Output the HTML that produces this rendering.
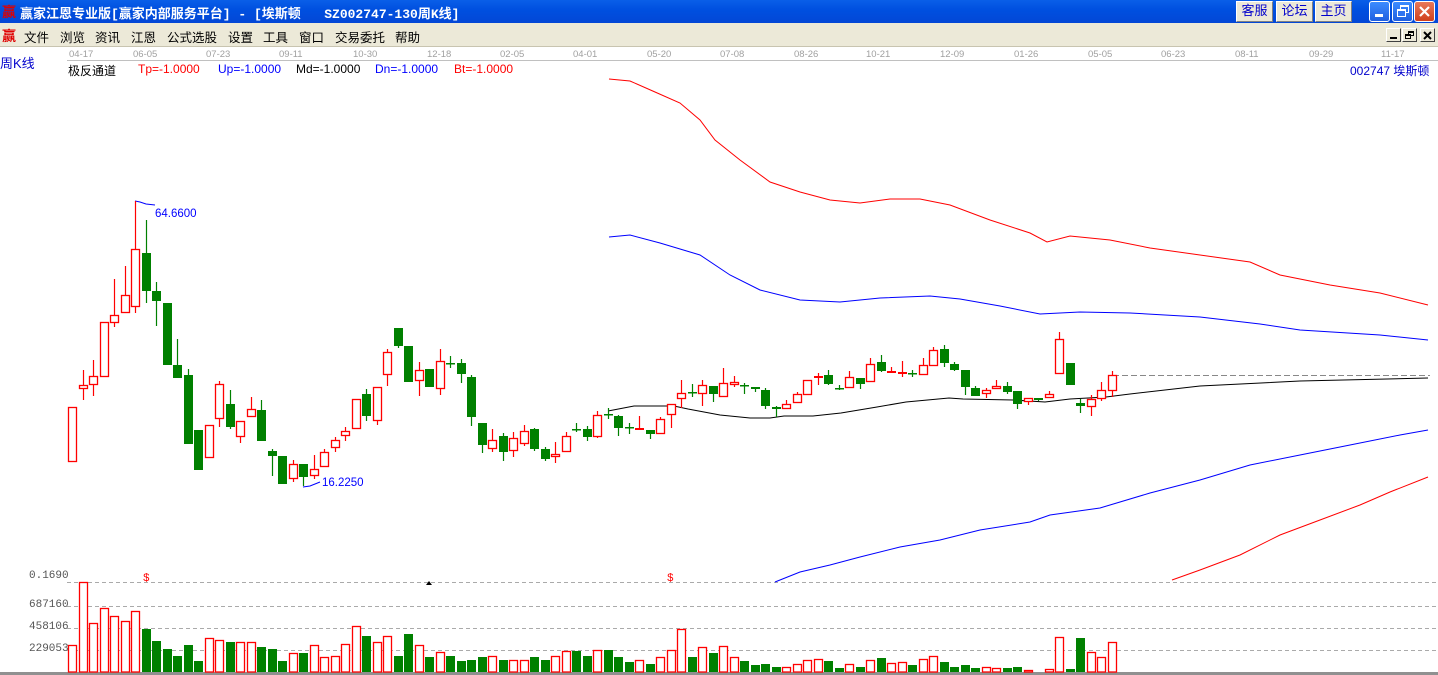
<!DOCTYPE html>
<html><head><meta charset="utf-8"><style>
*{margin:0;padding:0;box-sizing:border-box}
body{width:1438px;height:675px;overflow:hidden;background:#fff;position:relative;font-family:"Liberation Sans","Noto Sans CJK SC",sans-serif}
.title{position:absolute;left:0;top:0;width:1438px;height:23px;background:linear-gradient(#0a5fe8,#0050e0 40%,#0347d6);}
.title .t{position:absolute;left:20px;top:3px;color:#fff;font-weight:bold;font-size:13px;letter-spacing:0;white-space:pre;font-family:"Liberation Mono","Noto Sans CJK SC",monospace}
.ico{position:absolute;color:#e00000;font-weight:bold;font-size:14px;font-family:"Noto Sans CJK SC",sans-serif}
.tb{position:absolute;top:1px;height:21px;width:37px;background:#ece9d8;border:1px solid #fff;border-right-color:#808080;border-bottom-color:#808080;color:#00c;font-size:13px;text-align:center;line-height:18px}
.wb{position:absolute;top:1px;width:21px;height:21px;border:1px solid #fff;border-radius:3px;background:linear-gradient(#3c8cff,#1f5fe0)}
.menu{position:absolute;left:0;top:23px;width:1438px;height:24px;background:#ece9d8;border-bottom:1px solid #c8c4b0}
.menu span{position:absolute;top:4px;font-size:12.5px;color:#000}
.mb{position:absolute;top:28px;width:15px;height:14px;background:#ece9d8;border:1px solid #fff;border-right-color:#404040;border-bottom-color:#404040}
.d{position:absolute;top:49px;font-size:9.5px;color:#a0a0a0}
.lg{position:absolute;top:62px;font-size:12px}
.vl{position:absolute;left:29px;font-size:11px;color:#555;font-family:"Liberation Mono",monospace}
</style></head><body>
<div class="title"><span class="ico" style="left:2px;top:2px">赢</span><span class="t">赢家江恩专业版[赢家内部服务平台] - [埃斯顿   SZ002747-130周K线]</span>
<div class="tb" style="left:1236px">客服</div><div class="tb" style="left:1276px">论坛</div><div class="tb" style="left:1315px">主页</div>
<div class="wb" style="left:1369px"><div style="position:absolute;left:5px;top:12px;width:8px;height:3px;background:#fff"></div></div>
<div class="wb" style="left:1392px"><div style="position:absolute;left:7px;top:3px;width:9px;height:8px;border:2px solid #fff;border-width:2px 1px 1px 1px"></div><div style="position:absolute;left:4px;top:7px;width:9px;height:8px;border:2px solid #fff;border-width:2px 1px 1px 1px;background:#2f74f0"></div></div>
<div class="wb" style="left:1414px;background:linear-gradient(#e8785a,#d0401c)"><svg width="19" height="19" style="position:absolute;left:0;top:0"><path d="M5 5L14 14M14 5L5 14" stroke="#fff" stroke-width="2.2"/></svg></div>
</div>
<div class="menu"><span style="left:2px;top:3px;color:#e00000;font-weight:bold;font-size:14px">赢</span>
<span style="left:24px">文件</span><span style="left:60px">浏览</span><span style="left:95px">资讯</span><span style="left:131px">江恩</span><span style="left:167px">公式选股</span><span style="left:228px">设置</span><span style="left:263px">工具</span><span style="left:299px">窗口</span><span style="left:335px">交易委托</span><span style="left:395px">帮助</span>
</div>
<div class="mb" style="left:1386px"><div style="position:absolute;left:3px;top:8px;width:7px;height:2px;background:#000"></div></div>
<div class="mb" style="left:1402px"><div style="position:absolute;left:5px;top:2px;width:6px;height:5px;border:1px solid #000;border-top-width:2px"></div><div style="position:absolute;left:2px;top:5px;width:6px;height:5px;border:1px solid #000;border-top-width:2px;background:#ece9d8"></div></div>
<div class="mb" style="left:1420px"><svg width="13" height="12" style="position:absolute;left:0;top:0"><path d="M3 3L10 10M10 3L3 10" stroke="#000" stroke-width="2"/></svg></div>
<div style="position:absolute;left:67px;top:60px;width:1371px;height:1px;background:#c0c0c0"></div>
<span class="d" style="left:69px">04-17</span><span class="d" style="left:133px">06-05</span><span class="d" style="left:206px">07-23</span><span class="d" style="left:279px">09-11</span><span class="d" style="left:353px">10-30</span><span class="d" style="left:427px">12-18</span><span class="d" style="left:500px">02-05</span><span class="d" style="left:573px">04-01</span><span class="d" style="left:647px">05-20</span><span class="d" style="left:720px">07-08</span><span class="d" style="left:794px">08-26</span><span class="d" style="left:866px">10-21</span><span class="d" style="left:940px">12-09</span><span class="d" style="left:1014px">01-26</span><span class="d" style="left:1088px">05-05</span><span class="d" style="left:1161px">06-23</span><span class="d" style="left:1235px">08-11</span><span class="d" style="left:1309px">09-29</span><span class="d" style="left:1381px">11-17</span>
<span class="lg" style="left:0;top:53px;color:#00c;font-size:13px">周K线</span>
<span class="lg" style="left:68px;color:#000">极反通道</span><span class="lg" style="left:138px;color:#f00">Tp=-1.0000</span><span class="lg" style="left:218px;color:#00f">Up=-1.0000</span><span class="lg" style="left:296px;color:#000">Md=-1.0000</span><span class="lg" style="left:375px;color:#00f">Dn=-1.0000</span><span class="lg" style="left:454px;color:#f00">Bt=-1.0000</span>
<span class="lg" style="left:1350px;color:#00c">002747 埃斯顿</span>
<span class="vl" style="top:570px">0.1690</span><span class="vl" style="top:599px">687160</span><span class="vl" style="top:621px">458106</span><span class="vl" style="top:643px">229053</span>
<svg id="s" width="1438" height="675" style="position:absolute;left:0;top:0" xmlns="http://www.w3.org/2000/svg">
<g stroke="#aaa" stroke-dasharray="4,3" stroke-width="1"><path d="M67 582.5H1438M67 606.5H1438M67 628.5H1438M67 650.5H1438"/></g>
<rect x="0" y="672" width="1438" height="3" fill="#909090"/>
<text x="143" y="581" fill="#f00" font-size="11" font-family="Liberation Mono">$</text>
<text x="667" y="581" fill="#f00" font-size="11" font-family="Liberation Mono">$</text>
<path d="M426 585L429 581L432 585Z" fill="#000"/>
<g fill="none" stroke-width="1">
<polyline stroke="#f00" points="609,79 630,81 655,92 680,103 700,120 715,140 740,160 770,182 800,192 830,200 860,203 890,199 920,199 950,205 990,220 1030,233 1047,242 1070,236 1110,240 1150,248 1200,255 1250,262 1280,275 1330,285 1380,293 1428,305"/>
<polyline stroke="#00f" points="609,237 630,235 660,243 700,255 730,275 760,290 800,300 840,302 880,298 930,296 960,299 1000,306 1040,314 1080,312 1130,313 1200,317 1260,324 1300,330 1380,335 1428,340"/>
<polyline stroke="#00f" points="775,582 800,572 830,565 860,557 900,547 940,540 980,530 1030,522 1050,515 1100,508 1150,493 1200,480 1250,465 1300,455 1350,445 1400,435 1428,430"/>
<polyline stroke="#f00" points="1172,580 1200,570 1240,555 1280,535 1320,520 1360,505 1390,492 1428,477"/>
<polyline stroke="#000" points="608,411 634,406 674,406 688,409 720,415 750,418 770,418 784,416 813,416 841,413 877,407 906,402 949,398 963,399 1013,400 1045,402 1070,399 1106,397 1130,394 1200,386 1300,381 1428,378"/>
<path d="M1113 375.5H1430" stroke="#888" stroke-dasharray="6,3"/>
<polyline stroke="#00f" points="135,201 140,202 146,204 155,205"/>
<polyline stroke="#00f" points="303,487 310,486 315,484 320,482"/>
</g>
<text x="155" y="217" fill="#00f" font-size="11.5" font-family="Liberation Sans">64.6600</text>
<text x="322" y="486" fill="#00f" font-size="11.5" font-family="Liberation Sans">16.2250</text>
<g id="c"></g>
</svg>
<script>
var C=[[407,462,407,462,'r'],[385,389,370,400,'r'],[376,385,360,396,'r'],[322,377,322,377,'r'],[315,323,279,327,'r'],[295,313,266,313,'r'],[249,307,201,313,'r'],[253,291,220,303,'g'],[291,301,282,326,'g'],[303,365,303,365,'g'],
[365,378,339,378,'g'],[375,444,369,444,'g'],[430,470,430,470,'g'],[425,458,425,458,'r'],[384,419,381,427,'r'],[404,427,390,429,'g'],[421,437,421,443,'r'],[409,417,397,417,'r'],[410,441,400,441,'g'],[451,456,449,476,'g'],
[456,484,456,484,'g'],[464,479,460,482,'r'],[464,477,464,486,'g'],[469,476,455,479,'r'],[452,467,449,467,'r'],[440,448,437,452,'r'],[431,436,427,441,'r'],[399,429,399,429,'r'],[394,416,389,421,'g'],[387,421,387,425,'r'],
[352,375,349,386,'r'],[328,346,328,348,'g'],[346,382,346,382,'g'],[370,381,362,396,'r'],[369,387,369,387,'g'],[361,389,349,395,'r'],[363,363,356,368,'g'],[363,374,359,383,'g'],[377,417,375,426,'g'],[423,445,423,453,'g'],
[440,449,429,452,'r'],[436,452,433,461,'g'],[438,451,432,457,'r'],[431,444,425,446,'r'],[429,449,428,451,'g'],[449,459,447,461,'g'],[454,457,442,463,'r'],[436,452,432,452,'r'],[429,429,423,432,'g'],[429,437,426,441,'g'],
[415,437,411,438,'r'],[414,414,408,419,'g'],[416,428,415,436,'g'],[427,427,423,434,'g'],[428,429,416,429,'r'],[430,434,430,439,'g'],[419,434,417,434,'r'],[404,415,404,428,'r'],[393,399,380,408,'r'],[392,392,384,397,'g'],
[385,394,380,406,'r'],[386,394,386,402,'g'],[383,397,368,397,'r'],[382,385,376,387,'r'],[385,385,383,394,'g'],[387,389,387,392,'g'],[390,406,388,409,'g'],[407,409,406,417,'g'],[404,409,400,409,'r'],[394,403,392,403,'r'],
[380,395,380,395,'r'],[376,377,373,385,'r'],[375,384,370,385,'g'],[388,388,385,390,'g'],[377,388,371,388,'r'],[378,384,378,389,'g'],[364,382,358,382,'r'],[362,371,355,372,'g'],[371,372,367,373,'r'],[372,372,361,377,'r'],
[373,373,370,377,'g'],[365,375,358,375,'r'],[350,366,347,366,'r'],[349,363,345,367,'g'],[364,370,362,371,'g'],[370,387,370,395,'g'],[388,396,386,396,'g'],[390,394,388,398,'r'],[386,389,380,389,'r'],[386,392,382,394,'g'],
[391,404,391,409,'g'],[398,402,398,405,'r'],[398,400,398,401,'g'],[394,398,391,398,'r'],[339,374,332,374,'r'],[363,385,363,385,'g'],[403,406,399,413,'g'],[399,407,395,416,'r'],[390,399,382,401,'r'],[375,391,371,397,'r']];
var V=[645,582,623,608,616,621,611,629,641,649,656,645,661,638,640,642,642,642,647,649,661,653,653,645,657,656,644,626,636,642,636,656,634,645,657,652,656,661,660,657,656,660,660,660,657,660,656,651,651,656,650,650,657,662,660,664,657,650,629,657,647,653,646,657,661,665,664,667,667,664,660,659,661,668,664,667,660,658,663,662,665,659,656,662,667,665,668,667,668,668,667,670,672,669,637,669,638,652,657,642];
var h='';
for(var i=0;i<C.length;i++){var c=C[i],x=Math.round(72+i*10.5),col=c[4]=='r'?'#f00':'#008000';
h+='<path d="M'+(x+0.5)+' '+c[2]+'V'+c[3]+'" stroke="'+col+'" stroke-width="1.2"/>';
var bh=c[1]-c[0];
if(c[4]=='g'){h+='<rect x="'+(x-4)+'" y="'+c[0]+'" width="9" height="'+Math.max(bh,1.5)+'" fill="#008000"/>';}
else if(bh<2){h+='<rect x="'+(x-4)+'" y="'+c[0]+'" width="9" height="2" fill="#f00"/>';}
else{h+='<rect x="'+(x-3.5)+'" y="'+(c[0]+0.5)+'" width="8" height="'+(bh-1)+'" fill="#fff" stroke="#f00" stroke-width="1.3"/>';}
var t=V[i],vh=672-t;
if(vh>0){if(c[4]=='g')h+='<rect x="'+(x-4)+'" y="'+t+'" width="9" height="'+vh+'" fill="#008000"/>';
else h+='<rect x="'+(x-3.5)+'" y="'+(t+0.5)+'" width="8" height="'+(vh-0.5)+'" fill="#fff" stroke="#f00" stroke-width="1.3"/>';}
}
document.getElementById('c').innerHTML=h;
</script>
</body></html>
